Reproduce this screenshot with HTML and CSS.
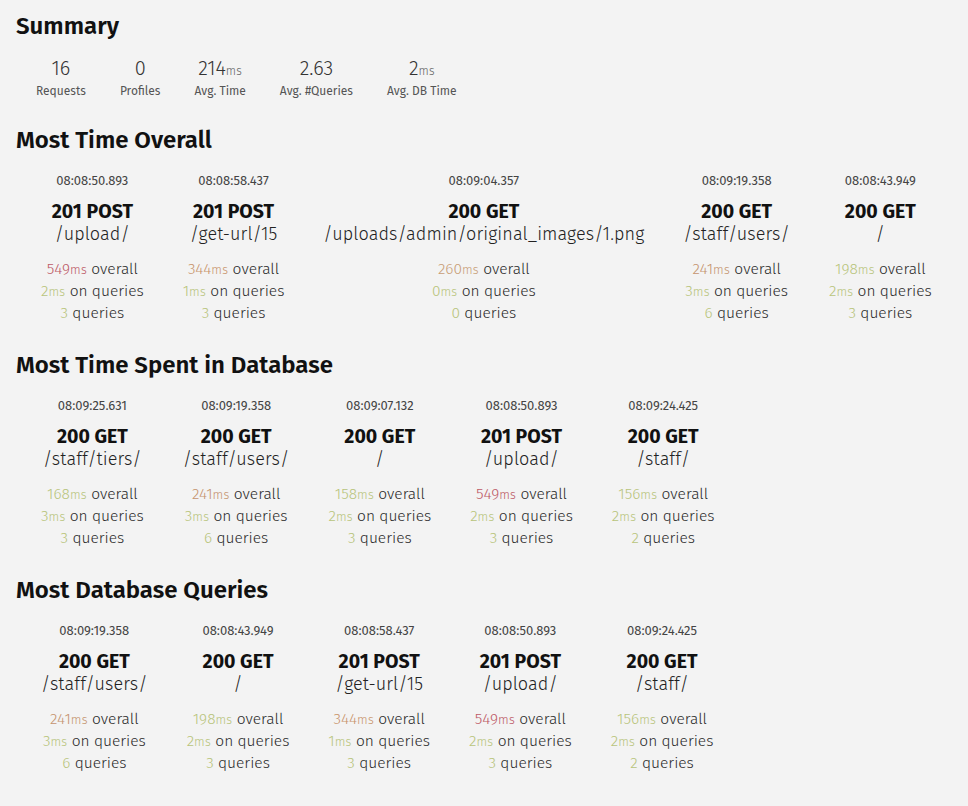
FILE: index.html
```html
<!DOCTYPE html>
<html lang="en">
<head>
<meta charset="utf-8">
<title>Silk - Summary</title>
<link rel="stylesheet" href="styles.css">
</head>
<body>
<div class="page">
  <h2 class="heading heading-first">Summary</h2>
  <div class="summary">
    <div class="summary-cell"><div class="data">16</div><div class="desc">Requests</div></div>
    <div class="summary-cell"><div class="data">0</div><div class="desc">Profiles</div></div>
    <div class="summary-cell"><div class="data">214<span class="unit">ms</span></div><div class="desc">Avg. Time</div></div>
    <div class="summary-cell"><div class="data">2.63</div><div class="desc">Avg. #Queries</div></div>
    <div class="summary-cell"><div class="data">2<span class="unit">ms</span></div><div class="desc">Avg. DB Time</div></div>
  </div>

  <h2 class="heading">Most Time Overall</h2>
  <div class="row">
    <div class="req">
      <div class="time">08:08:50.893</div>
      <div class="title">201 POST</div>
      <div class="path">/upload/</div>
      <div class="stats">
        <div><span class="c-red">549<span class="unit">ms</span></span> overall</div>
        <div><span class="c-green">2<span class="unit">ms</span></span> on queries</div>
        <div><span class="c-green">3</span> queries</div>
      </div>
    </div>
    <div class="req">
      <div class="time">08:08:58.437</div>
      <div class="title">201 POST</div>
      <div class="path">/get-url/15</div>
      <div class="stats">
        <div><span class="c-orange">344<span class="unit">ms</span></span> overall</div>
        <div><span class="c-green">1<span class="unit">ms</span></span> on queries</div>
        <div><span class="c-green">3</span> queries</div>
      </div>
    </div>
    <div class="req">
      <div class="time">08:09:04.357</div>
      <div class="title">200 GET</div>
      <div class="path">/uploads/admin/original_images/1.png</div>
      <div class="stats">
        <div><span class="c-tan">260<span class="unit">ms</span></span> overall</div>
        <div><span class="c-green">0<span class="unit">ms</span></span> on queries</div>
        <div><span class="c-green">0</span> queries</div>
      </div>
    </div>
    <div class="req">
      <div class="time">08:09:19.358</div>
      <div class="title">200 GET</div>
      <div class="path">/staff/users/</div>
      <div class="stats">
        <div><span class="c-tan2">241<span class="unit">ms</span></span> overall</div>
        <div><span class="c-green">3<span class="unit">ms</span></span> on queries</div>
        <div><span class="c-green">6</span> queries</div>
      </div>
    </div>
    <div class="req">
      <div class="time">08:08:43.949</div>
      <div class="title">200 GET</div>
      <div class="path">/</div>
      <div class="stats">
        <div><span class="c-green">198<span class="unit">ms</span></span> overall</div>
        <div><span class="c-green">2<span class="unit">ms</span></span> on queries</div>
        <div><span class="c-green">3</span> queries</div>
      </div>
    </div>
  </div>

  <h2 class="heading">Most Time Spent in Database</h2>
  <div class="row">
    <div class="req">
      <div class="time">08:09:25.631</div>
      <div class="title">200 GET</div>
      <div class="path">/staff/tiers/</div>
      <div class="stats">
        <div><span class="c-green">168<span class="unit">ms</span></span> overall</div>
        <div><span class="c-green">3<span class="unit">ms</span></span> on queries</div>
        <div><span class="c-green">3</span> queries</div>
      </div>
    </div>
    <div class="req">
      <div class="time">08:09:19.358</div>
      <div class="title">200 GET</div>
      <div class="path">/staff/users/</div>
      <div class="stats">
        <div><span class="c-tan2">241<span class="unit">ms</span></span> overall</div>
        <div><span class="c-green">3<span class="unit">ms</span></span> on queries</div>
        <div><span class="c-green">6</span> queries</div>
      </div>
    </div>
    <div class="req">
      <div class="time">08:09:07.132</div>
      <div class="title">200 GET</div>
      <div class="path">/</div>
      <div class="stats">
        <div><span class="c-green">158<span class="unit">ms</span></span> overall</div>
        <div><span class="c-green">2<span class="unit">ms</span></span> on queries</div>
        <div><span class="c-green">3</span> queries</div>
      </div>
    </div>
    <div class="req">
      <div class="time">08:08:50.893</div>
      <div class="title">201 POST</div>
      <div class="path">/upload/</div>
      <div class="stats">
        <div><span class="c-red">549<span class="unit">ms</span></span> overall</div>
        <div><span class="c-green">2<span class="unit">ms</span></span> on queries</div>
        <div><span class="c-green">3</span> queries</div>
      </div>
    </div>
    <div class="req">
      <div class="time">08:09:24.425</div>
      <div class="title">200 GET</div>
      <div class="path">/staff/</div>
      <div class="stats">
        <div><span class="c-green">156<span class="unit">ms</span></span> overall</div>
        <div><span class="c-green">2<span class="unit">ms</span></span> on queries</div>
        <div><span class="c-green">2</span> queries</div>
      </div>
    </div>
  </div>

  <h2 class="heading">Most Database Queries</h2>
  <div class="row">
    <div class="req">
      <div class="time">08:09:19.358</div>
      <div class="title">200 GET</div>
      <div class="path">/staff/users/</div>
      <div class="stats">
        <div><span class="c-tan2">241<span class="unit">ms</span></span> overall</div>
        <div><span class="c-green">3<span class="unit">ms</span></span> on queries</div>
        <div><span class="c-green">6</span> queries</div>
      </div>
    </div>
    <div class="req">
      <div class="time">08:08:43.949</div>
      <div class="title">200 GET</div>
      <div class="path">/</div>
      <div class="stats">
        <div><span class="c-green">198<span class="unit">ms</span></span> overall</div>
        <div><span class="c-green">2<span class="unit">ms</span></span> on queries</div>
        <div><span class="c-green">3</span> queries</div>
      </div>
    </div>
    <div class="req">
      <div class="time">08:08:58.437</div>
      <div class="title">201 POST</div>
      <div class="path">/get-url/15</div>
      <div class="stats">
        <div><span class="c-orange">344<span class="unit">ms</span></span> overall</div>
        <div><span class="c-green">1<span class="unit">ms</span></span> on queries</div>
        <div><span class="c-green">3</span> queries</div>
      </div>
    </div>
    <div class="req">
      <div class="time">08:08:50.893</div>
      <div class="title">201 POST</div>
      <div class="path">/upload/</div>
      <div class="stats">
        <div><span class="c-red">549<span class="unit">ms</span></span> overall</div>
        <div><span class="c-green">2<span class="unit">ms</span></span> on queries</div>
        <div><span class="c-green">3</span> queries</div>
      </div>
    </div>
    <div class="req">
      <div class="time">08:09:24.425</div>
      <div class="title">200 GET</div>
      <div class="path">/staff/</div>
      <div class="stats">
        <div><span class="c-green">156<span class="unit">ms</span></span> overall</div>
        <div><span class="c-green">2<span class="unit">ms</span></span> on queries</div>
        <div><span class="c-green">2</span> queries</div>
      </div>
    </div>
  </div>
</div>
</body>
</html>
```

FILE: styles.css
```css
html, body {
  margin: 0;
  padding: 0;
  background: #f3f3f3;
}

body {
  font-family: "Fira Sans", "Open Sans", "Liberation Sans", sans-serif;
  color: #333;
  width: 968px;
  height: 806px;
  overflow: hidden;
}

.page {
  padding: 0 16px;
}

.heading {
  margin: 0;
  padding-top: 27px;
  font-size: 24px;
  line-height: 28px;
  font-weight: 600;
  color: #111;
}

.heading-first {
  padding-top: 12px;
}

.summary {
  display: flex;
  gap: 34px;
  padding-left: 20px;
  margin-top: 16px;
}

.summary + .heading {
  padding-top: 28px;
}

.summary-cell {
  text-align: center;
}

.summary-cell .data {
  font-size: 20px;
  font-weight: 300;
  line-height: 24px;
  color: #333;
}

.summary-cell .desc {
  margin-top: 4px;
  font-size: 12px;
  line-height: 14px;
  color: #555;
}

.unit {
  font-size: 12.5px;
  line-height: 1;
  letter-spacing: 0.2px;
}

.summary-cell .unit {
  font-size: 12px;
  color: #666;
}

.row {
  display: flex;
  gap: 39px;
  padding-left: 25px;
  margin-top: 19px;
}

.req {
  text-align: center;
  white-space: nowrap;
}

.time {
  font-size: 13px;
  line-height: 16px;
  color: #444;
}

.title {
  margin-top: 12px;
  font-size: 19.5px;
  line-height: 22px;
  font-weight: 700;
  color: #111;
}

.path {
  font-size: 18px;
  line-height: 22px;
  font-weight: 300;
  letter-spacing: 0.1px;
  color: #222;
}

.stats {
  margin-top: 13px;
  font-size: 15.5px;
  line-height: 22px;
  font-weight: 300;
  color: #2a2a2a;
}

.c-red { color: #bd5a66; }
.c-orange { color: #c9956d; }
.c-tan { color: #c89d76; }
.c-tan2 { color: #c5936f; }
.c-green { color: #b8c47b; }
```
